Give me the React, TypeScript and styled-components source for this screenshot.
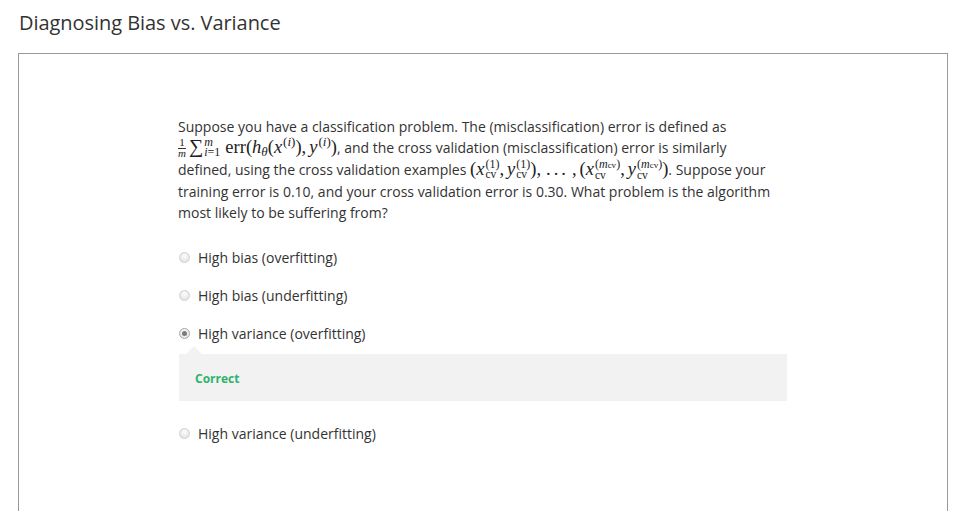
import React from "react";
import styled, { createGlobalStyle } from "styled-components";

const Global = createGlobalStyle`
  html, body { margin: 0; padding: 0; background: #fff; }
  body { font-family: "Open Sans", "Liberation Sans", sans-serif; color: #333; }
`;

const Page = styled.div`
  padding: 9px 19px 0 18px;
  height: 511px;
  overflow: hidden;
  box-sizing: border-box;
`;

const Title = styled.h1`
  margin: 0 0 0 1px;
  font-size: 20px;
  font-weight: 400;
  line-height: 28px;
  color: #333;
  letter-spacing: -0.05px;
`;

const Card = styled.div`
  margin-top: 16px;
  width: 930px;
  min-height: 600px;
  box-sizing: border-box;
  border: 1px solid #999;
  padding: 63px 0 0 159px;
`;

const Column = styled.div`
  width: 610px;
`;

const Prompt = styled.div`
  font-size: 14px;
  line-height: 21px;
  color: #333;
`;

const Line = styled.div<{ $h?: number }>`
  height: ${(p) => p.$h ?? 21}px;
  line-height: ${(p) => p.$h ?? 21}px;
  white-space: nowrap;
`;

const M = styled.span`
  font-family: "Liberation Serif", "DejaVu Serif", serif;
  font-size: 18.5px;
  font-style: normal;
  line-height: 0;
  color: #222;
`;

const I = styled.span`
  font-style: italic;
`;

const Comma = styled.span`
  margin-right: 3px;
`;

const Dots = styled.span`
  letter-spacing: 3px;
  margin: 0 3px 0 2px;
`;

const Gap = styled.span`
  margin-left: 5px;
`;

const Frac = styled.span`
  display: inline-flex;
  flex-direction: column;
  align-items: center;
  vertical-align: 7px;
  font-size: 11px;
  line-height: 9px;
  margin-right: 3px;
  & > span:first-child {
    border-bottom: 1px solid #333;
    padding: 0 1px 1px;
  }
`;

const Scripts = styled.span`
  display: inline-flex;
  flex-direction: column;
  vertical-align: 7px;
  font-size: 12px;
  line-height: 9.5px;
  margin-left: 1px;
`;

const Sup = styled.span`
  vertical-align: 7px;
  font-size: 13px;
  line-height: 0;
  margin-left: 1px;
`;

const Sub = styled.span`
  vertical-align: -3px;
  font-size: 13px;
  line-height: 0;
`;

const Tiny = styled.span`
  font-size: 9px;
`;

const CvText = styled.span`
  font-size: 11.5px;
`;

const Options = styled.div`
  margin-top: 15px;
  display: flex;
  flex-direction: column;
`;

const Option = styled.label`
  display: flex;
  align-items: center;
  gap: 8px;
  height: 38px;
  font-size: 14px;
  color: #333;
`;

const Radio = styled.span<{ $checked?: boolean }>`
  width: 11px;
  height: 11px;
  margin-left: 1px;
  border-radius: 50%;
  box-sizing: border-box;
  border: 1px solid ${(p) => (p.$checked ? "#a8a8a8" : "#d0d0d0")};
  background: radial-gradient(circle at 50% 35%, #fdfdfd 0%, #e6e6e6 70%, #d8d8d8 100%);
  display: flex;
  align-items: center;
  justify-content: center;
  &::after {
    content: "";
    display: ${(p) => (p.$checked ? "block" : "none")};
    width: 5px;
    height: 5px;
    border-radius: 50%;
    background: #7a7a7a;
  }
`;

const Feedback = styled.div`
  position: relative;
  margin: 2px 0 13px 1px;
  width: 608px;
  height: 47px;
  background: #f2f2f2;
  display: flex;
  align-items: center;
  padding-left: 16px;
  box-sizing: border-box;
  &::before {
    content: "";
    position: absolute;
    top: -8px;
    left: 7px;
    border-left: 8px solid transparent;
    border-right: 8px solid transparent;
    border-bottom: 8px solid #f2f2f2;
  }
`;

const Correct = styled.span`
  font-size: 12px;
  font-weight: 700;
  color: #2eb36e;
  margin-top: 2px;
`;

const Xcv = ({ base, sup }: { base: string; sup: React.ReactNode }) => (
  <>
    <I>{base}</I>
    <Scripts>
      <span>{sup}</span>
      <CvText>cv</CvText>
    </Scripts>
  </>
);

export default function App() {
  const mcv = (
    <>
      (<I>m</I>
      <Tiny>cv</Tiny>)
    </>
  );
  return (
    <Page>
      <Global />
      <Title>Diagnosing Bias vs. Variance</Title>
      <Card>
        <Column>
          <Prompt>
            <Line $h={20}>
              Suppose you have a classification problem. The (misclassification) error is defined as
            </Line>
            <Line $h={22}>
              <M>
                <Frac>
                  <span>1</span>
                  <I>m</I>
                </Frac>
                <span style={{ fontSize: "20px" }}>∑</span>
                <Scripts>
                  <I>m</I>
                  <span>
                    <I>i</I>=1
                  </span>
                </Scripts>
                <Gap>err</Gap>(<I>h</I>
                <Sub>
                  <I>θ</I>
                </Sub>
                (<I>x</I>
                <Sup>
                  (<I>i</I>)
                </Sup>
                )<Comma>,</Comma>
                <I>y</I>
                <Sup>
                  (<I>i</I>)
                </Sup>
                )
              </M>
              , and the cross validation (misclassification) error is similarly
            </Line>
            <Line $h={22}>
              defined, using the cross validation examples{" "}
              <M>
                (<Xcv base="x" sup="(1)" />
                <Comma>,</Comma>
                <Xcv base="y" sup="(1)" />)<Comma>,</Comma>
                <Dots>...</Dots>
                <Comma>,</Comma>(<Xcv base="x" sup={mcv} />
                <Comma>,</Comma>
                <Xcv base="y" sup={mcv} />)
              </M>
              . Suppose your
            </Line>
            <Line>
              training error is 0.10, and your cross validation error is 0.30. What problem is the algorithm
            </Line>
            <Line>most likely to be suffering from?</Line>
          </Prompt>
          <Options>
            <Option>
              <Radio />
              High bias (overfitting)
            </Option>
            <Option>
              <Radio />
              High bias (underfitting)
            </Option>
            <Option>
              <Radio $checked />
              High variance (overfitting)
            </Option>
            <Feedback>
              <Correct>Correct</Correct>
            </Feedback>
            <Option>
              <Radio />
              High variance (underfitting)
            </Option>
          </Options>
        </Column>
      </Card>
    </Page>
  );
}
